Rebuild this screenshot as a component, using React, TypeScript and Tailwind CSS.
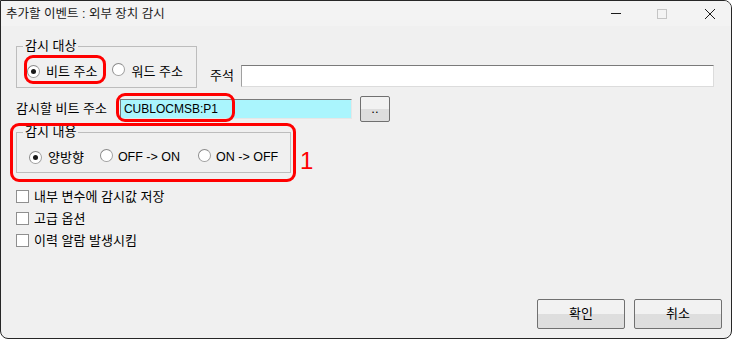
import React from 'react';

const KO = { fontFamily: '"Liberation Sans", "Noto Sans CJK KR", sans-serif' };

function Radio({ checked }: { checked?: boolean }) {
  return (
    <span className="relative inline-flex h-[13px] w-[13px] shrink-0 items-center justify-center rounded-full border border-[#a0a0a0] border-t-[#8a8a8a] border-l-[#8a8a8a] bg-white">
      {checked && <span className="h-[5px] w-[5px] rounded-full bg-[#1a1a1a]" />}
    </span>
  );
}

function Check() {
  return <span className="inline-block h-[13px] w-[13px] shrink-0 border border-[#8f8f8f] bg-white" />;
}

function WinButton({ children, className = '' }: { children: React.ReactNode; className?: string }) {
  return (
    <button
      className={`flex items-center justify-center rounded-[2px] border border-[#707070] bg-gradient-to-b from-[#f2f2f2] from-50% to-[#dedede] to-50% text-[13px] text-black ${className}`}
    >
      {children}
    </button>
  );
}

export default function App() {
  return (
    <div className="h-[339px] w-[732px] bg-white text-[13px] text-black" style={KO}>
      <div className="relative flex h-full w-full flex-col overflow-hidden rounded-tr-[8px] rounded-b-[8px] border border-[#262626] bg-[#f0f0f0]">
        {/* title bar */}
        <div className="flex h-[25px] shrink-0 items-center bg-[#f3f3f3]">
          <span className="pl-[5px] pt-[1px] text-[12.5px] text-[#1a1a1a]">추가할 이벤트 : 외부 장치 감시</span>
          <div className="ml-auto flex h-full items-center">
            <span className="flex w-[46px] justify-center">
              <span className="h-[1px] w-[10px] bg-[#1a1a1a]" />
            </span>
            <span className="flex w-[46px] justify-center">
              <span className="h-[10px] w-[10px] border border-[#c4c4c4]" />
            </span>
            <span className="flex w-[46px] justify-center pl-[4px]">
              <svg width="12" height="12" viewBox="0 0 12 12" fill="none" stroke="#1a1a1a" strokeWidth="1">
                <path d="M1 1 L11 11 M11 1 L1 11" />
              </svg>
            </span>
          </div>
        </div>

        {/* body */}
        <div className="flex flex-1 flex-col whitespace-nowrap pl-[15px] pr-[9px]">
          <div className="mt-[13px] flex items-end">
            <fieldset className="h-[49px] w-[181px] shrink-0 border border-[#bdbdbd] px-[10px]">
              <legend className="ml-[-4px] px-[2px] leading-[14px]">감시 대상</legend>
              <div className="mt-[9px] flex items-center">
                <Radio checked />
                <span className="ml-[6px]">비트 주소</span>
                <span className="ml-[15px]"><Radio /></span>
                <span className="ml-[6px]">워드 주소</span>
              </div>
            </fieldset>
            <span className="mb-[3px] ml-[13px]">주석</span>
            <div className="mb-[1px] ml-[7px] h-[22px] w-[473px] border border-[#dcdcdc] border-t-[#7a7a7a] border-l-[#a0a0a0] bg-white" />
          </div>

          <div className="mt-[8px] flex items-center">
            <span>감시할 비트 주소</span>
            <div className="ml-[13px] flex h-[20px] w-[232px] items-center border border-[#e6e6e6] border-t-[#7a7a7a] border-l-[#7a7a7a] bg-[#aaf5fd] pl-[3px] text-[12px]">
              CUBLOCMSB:P1
            </div>
            <WinButton className="ml-[8px] h-[26px] w-[30px] pb-[2px] leading-none">..</WinButton>
          </div>

          <fieldset className="mt-[3px] h-[48px] w-[274px] border border-[#bdbdbd] px-[12px]">
            <legend className="ml-[-6px] px-[2px] leading-[14px]">감시 내용</legend>
            <div className="mt-[9px] flex items-center">
              <Radio checked />
              <span className="ml-[6px]">양방향</span>
              <span className="ml-[16px]"><Radio /></span>
              <span className="ml-[5px] text-[12.5px]">OFF -&gt; ON</span>
              <span className="ml-[18px]"><Radio /></span>
              <span className="ml-[5px] text-[12.5px]">ON -&gt; OFF</span>
            </div>
          </fieldset>

          <div className="mt-[17px] flex flex-col gap-[9px]">
            <label className="flex h-[13px] items-center"><Check /><span className="ml-[5px]">내부 변수에 감시값 저장</span></label>
            <label className="flex h-[13px] items-center"><Check /><span className="ml-[5px]">고급 옵션</span></label>
            <label className="flex h-[13px] items-center"><Check /><span className="ml-[5px]">이력 알람 발생시킴</span></label>
          </div>

          <div className="mt-auto mb-[9px] flex justify-end gap-[9px]">
            <WinButton className="h-[30px] w-[88px]">확인</WinButton>
            <WinButton className="h-[30px] w-[88px]">취소</WinButton>
          </div>
        </div>

        {/* red annotations */}
        <div className="absolute left-[23px] top-[54px] h-[29px] w-[82px] rounded-[9px] border-[3px] border-[#ff0000]" />
        <div className="absolute left-[115px] top-[92px] h-[29px] w-[119px] rounded-[9px] border-[3px] border-[#ff0000]" />
        <div className="absolute left-[9px] top-[122px] h-[59px] w-[286px] rounded-[9px] border-[3px] border-[#ff0000]" />
        <span className="absolute left-[299px] top-[148px] text-[24px] leading-none text-[#ff0000]" style={{ fontFamily: '"Liberation Sans", sans-serif' }}>1</span>
      </div>
    </div>
  );
}
